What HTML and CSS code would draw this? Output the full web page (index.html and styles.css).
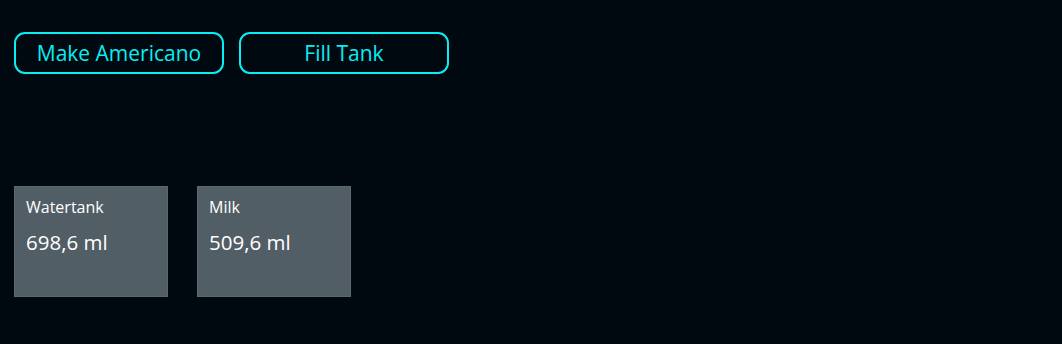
FILE: index.html
```html
<!DOCTYPE html>
<html lang="en">
<head>
  <meta charset="UTF-8" />
  <meta name="viewport" content="width=device-width, initial-scale=1.0" />
  <title>Coffee Machine</title>
  <link rel="stylesheet" href="styles.css">
</head>
<body>
  <div class="app">
    <div class="actions">
      <button class="action">Make Americano</button>
      <button class="action">Fill Tank</button>
    </div>

    <div class="tanks">
      <div class="tank">
        <div class="tank-name">Watertank</div>
        <div class="tank-level">698,6 ml</div>
      </div>
      <div class="tank">
        <div class="tank-name">Milk</div>
        <div class="tank-level">509,6 ml</div>
      </div>
    </div>
  </div>
</body>
</html>
```

FILE: styles.css
```css
html, body {
  margin: 0; padding: 0;
  width: 100%;
  height: 100%;
  overflow: hidden;
  background: #000810;
  font-family: 'Open Sans', 'Noto Sans', sans-serif;
}

.app {
  padding: 32px 14px 0 14px;
  box-sizing: border-box;
}

.actions {
  display: flex;
  gap: 15px;
}

.action {
  width: 210px;
  height: 42px;
  padding: 0;
  background: transparent;
  border: 2px solid #08eef2;
  border-radius: 11px;
  color: #08eef2;
  font-family: inherit;
  font-size: 21px;
  line-height: 36px;
  cursor: pointer;
}

.tanks {
  display: flex;
  gap: 29px;
  margin-top: 112px;
}

.tank {
  width: 154px;
  height: 111px;
  box-sizing: border-box;
  padding: 9px 11px;
  background: #525e65;
  border: 1px solid #5c676e;
  color: #ffffff;
}

.tank-name {
  font-size: 16px;
  line-height: 22px;
}

.tank-level {
  margin-top: 10px;
  font-size: 20.5px;
  line-height: 28px;
}
```
